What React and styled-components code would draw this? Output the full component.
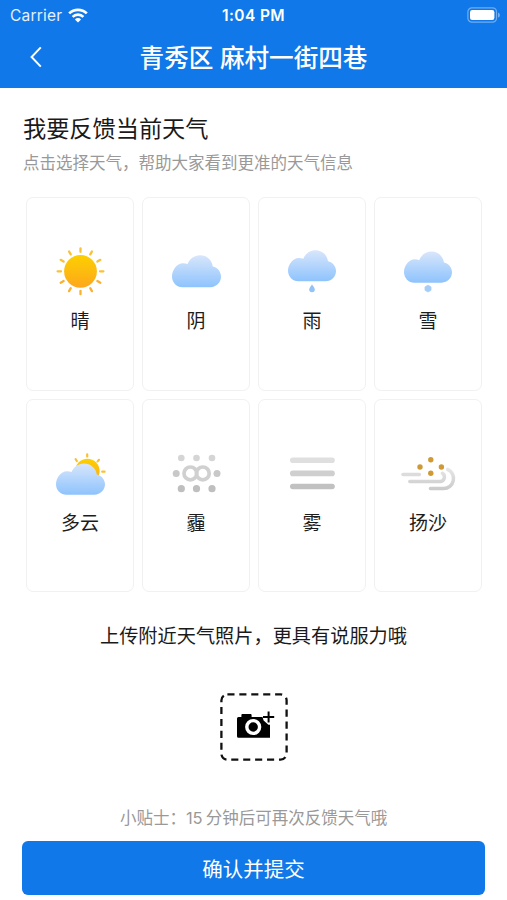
import styled, { createGlobalStyle } from "styled-components"

const GlobalStyle = createGlobalStyle`
    * {
        box-sizing: border-box;
    }

    body {
        margin: 0;
        background: #fff;
        font-family: Inter, "Noto Sans CJK SC", sans-serif;
    }
`

const CLOUD = "M10.5 32C4.7 32 0 27.2 0 21.2S4.7 8 11 8c1.7 0 3 .2 4.6.8C17.4 3.8 22.2 0 28 0c6.6 0 12 4.8 12.8 11.2C45.6 12.2 49 16.4 49 21.4 49 27.3 44.3 32 38.5 32Z"

function CloudGradient({ id }) {
    return (
        <linearGradient id={id} x1="0" y1="0" x2="0" y2="1">
            <stop offset="0" stopColor="#d8e6fb" />
            <stop offset="1" stopColor="#8ec3fd" />
        </linearGradient>
    )
}

function SunGradient({ id }) {
    return (
        <linearGradient id={id} x1="0" y1="0" x2="0" y2="1">
            <stop offset="0" stopColor="#fcd000" />
            <stop offset="1" stopColor="#fea71c" />
        </linearGradient>
    )
}

function SunnyIcon() {
    const rays = Array.from({ length: 12 }, (_, i) => i * 30)
    return (
        <Icon viewBox="0 0 60 60">
            <defs><SunGradient id="sunny" /></defs>
            <circle cx="30.5" cy="30.3" r="16.4" fill="url(#sunny)" />
            {rays.map(a => (
                <path key={a} d="M30.5 7.4v3.4" transform={`rotate(${a} 30.5 30.3)`} stroke={a > 90 && a < 270 ? "#fbb130" : "#f9c136"} strokeWidth="2.3" strokeLinecap="round" />
            ))}
        </Icon>
    )
}

function OvercastIcon() {
    return (
        <Icon viewBox="0 0 60 60">
            <defs><CloudGradient id="overcast" /></defs>
            <path d={CLOUD} transform="translate(6 14.2)" fill="url(#overcast)" />
        </Icon>
    )
}

function RainIcon() {
    return (
        <Icon viewBox="0 0 60 60">
            <defs><CloudGradient id="rain" /></defs>
            <path d={CLOUD} transform="translate(6 9.3) scale(.98 .97)" fill="url(#rain)" />
            <path d="M30 43.4c1.6 1.9 2.8 3.6 2.8 5.1a2.8 2.8 0 0 1-5.6 0c0-1.5 1.2-3.2 2.8-5.1Z" fill="#93c2f8" />
        </Icon>
    )
}

function SnowIcon() {
    return (
        <Icon viewBox="0 0 60 60">
            <defs><CloudGradient id="snow" /></defs>
            <path d={CLOUD} transform="translate(6 10.6) scale(.98 .97)" fill="url(#snow)" />
            <path d="M30 44.2l3 1.7v3.4l-3 1.7-3-1.7v-3.4Z" fill="#a6cdf8" stroke="#a6cdf8" strokeWidth=".8" strokeLinejoin="round" />
        </Icon>
    )
}

function CloudyIcon() {
    return (
        <Icon viewBox="0 0 60 60">
            <defs>
                <CloudGradient id="cloudy" />
                <SunGradient id="cloudySun" />
            </defs>
            <circle cx="37.4" cy="28" r="12.2" fill="url(#cloudySun)" />
            <path d="M37.2 11.4v2M49 16.8l-1.4 1.6M25.6 16.2l1.2 1.8M52.2 28.7h2.4" stroke="#fac02e" strokeWidth="2.2" strokeLinecap="round" />
            <path d={CLOUD} transform="translate(6 20.4) scale(1 .98)" fill="url(#cloudy)" />
        </Icon>
    )
}

function HazeIcon() {
    return (
        <Icon viewBox="0 0 60 60">
            <g fill="#d5d5d5">
                <circle cx="15.3" cy="15" r="3.3" />
                <circle cx="30.5" cy="15" r="3.3" />
                <circle cx="46" cy="15" r="3.3" />
            </g>
            <g fill="#c8c8c8">
                <circle cx="10.2" cy="30.4" r="3.5" />
                <circle cx="51" cy="30.4" r="3.5" />
            </g>
            <g fill="none" stroke="#d0d0d0" strokeWidth="3.7">
                <circle cx="24.4" cy="30.4" r="6.4" />
                <circle cx="36.8" cy="30.4" r="6.4" />
            </g>
            <g fill="#bfbfbf">
                <circle cx="15.3" cy="45.7" r="3.6" />
                <circle cx="30.5" cy="45.7" r="3.6" />
                <circle cx="46" cy="45.7" r="3.6" />
            </g>
        </Icon>
    )
}

function FogIcon() {
    return (
        <Icon viewBox="0 0 60 60">
            <g strokeWidth="5.6" strokeLinecap="round">
                <path d="M10.8 17.3h39.2" stroke="#dfdfdf" />
                <path d="M10.8 30.4h39.2" stroke="#cfcfcf" />
                <path d="M10.8 43.5h39.2" stroke="#c1c1c1" />
            </g>
        </Icon>
    )
}

function SandIcon() {
    return (
        <Icon viewBox="0 0 60 60">
            <defs>
                <linearGradient id="wind" gradientUnits="userSpaceOnUse" x1="0" y1="24" x2="0" y2="47">
                    <stop offset="0" stopColor="#e8e8e8" />
                    <stop offset="1" stopColor="#cacaca" />
                </linearGradient>
            </defs>
            <g fill="none" stroke="url(#wind)" strokeWidth="3.5" strokeLinecap="round">
                <path d="M5 31.5h16.4" stroke="#dcdcdc" />
                <path d="M11.8 38.4H42a4.4 4.4 0 0 0 2.4-8.1" />
                <path d="M32.4 45.5h13.1a10 10 0 0 0 4.2-19.1" />
            </g>
            <g fill="#cf9a35">
                <circle cx="32.8" cy="16.7" r="2.7" />
                <circle cx="22" cy="24" r="2.7" />
                <circle cx="43.4" cy="24" r="2.7" />
                <circle cx="32.8" cy="30.2" r="2.7" />
            </g>
        </Icon>
    )
}

const weathers = [
    { name: "晴", icon: SunnyIcon },
    { name: "阴", icon: OvercastIcon },
    { name: "雨", icon: RainIcon },
    { name: "雪", icon: SnowIcon },
    { name: "多云", icon: CloudyIcon },
    { name: "霾", icon: HazeIcon },
    { name: "雾", icon: FogIcon },
    { name: "扬沙", icon: SandIcon },
]

function App() {
    return (
        <Page>
            <GlobalStyle />
            <Header>
                <StatusBar>
                    <Carrier>
                        Carrier
                        <svg width="20" height="15" viewBox="0 0 20 15" fill="none" stroke="#fff" strokeWidth="2.7">
                            <path d="M1.2 5.4a12.5 12.5 0 0 1 17.6 0" />
                            <path d="M4.6 8.9a7.6 7.6 0 0 1 10.8 0" />
                            <path d="M10 14.6L6.9 11.4a4.4 4.4 0 0 1 6.2 0Z" fill="#fff" stroke="none" />
                        </svg>
                    </Carrier>
                    <Time>1:04 PM</Time>
                    <Battery>
                        <svg width="34" height="16" viewBox="0 0 34 16">
                            <rect x=".9" y=".8" width="28.6" height="14.4" rx="4" fill="none" stroke="#fff" strokeOpacity=".4" strokeWidth="1.2" />
                            <rect x="3" y="3" width="24.4" height="10" rx="2.2" fill="#fff" />
                            <path d="M31.2 5.4c2 .7 2 4.5 0 5.2Z" fill="#fff" fillOpacity=".5" />
                        </svg>
                    </Battery>
                </StatusBar>
                <NavBar>
                    <BackButton aria-label="返回">
                        <svg width="12" height="22" viewBox="0 0 12 22" fill="none" stroke="#fff" strokeWidth="2">
                            <path d="M10.8 1.4L1.6 11l9.2 9.6" />
                        </svg>
                    </BackButton>
                    <NavTitle>青秀区 麻村一街四巷</NavTitle>
                </NavBar>
            </Header>
            <Main>
                <Heading>我要反馈当前天气</Heading>
                <Description>点击选择天气，帮助大家看到更准的天气信息</Description>
                <Grid>
                    {weathers.map(({ name, icon: WeatherIcon }) => (
                        <Card key={name}>
                            <WeatherIcon />
                            <span>{name}</span>
                        </Card>
                    ))}
                </Grid>
                <UploadTitle>上传附近天气照片，更具有说服力哦</UploadTitle>
                <UploadButton aria-label="上传照片">
                    <svg width="68" height="68" viewBox="0 0 68 68">
                        <rect x="1.4" y="1.4" width="65.2" height="65.2" rx="6" fill="none" stroke="#111" strokeWidth="2.3" strokeDasharray="7.1 4.83" />
                        <path d="M17 25.6a1.5 1.5 0 0 1 1.5-1.5h2.9v-2.2a1 1 0 0 1 1-1h8.2a1 1 0 0 1 1 1v2.2H50v20.6H18.5a1.5 1.5 0 0 1-1.5-1.5Z" fill="#000" />
                        <circle cx="33.2" cy="34" r="6.4" fill="#000" stroke="#fff" strokeWidth="3.4" />
                        <path d="M42 22.4h14v6.8h-4.4v2.6h-3.2l-4.8-4.4Z" fill="#fff" />
                        <path d="M48.6 18.4v11.2M43 24h11.2" stroke="#000" strokeWidth="2" />
                    </svg>
                </UploadButton>
                <Tip>小贴士：<span>15</span>分钟后可再次反馈天气哦</Tip>
                <SubmitButton>确认并提交</SubmitButton>
            </Main>
        </Page>
    )
}

const Page = styled.div`
    width: 507px;
    height: 900px;
    overflow: hidden;
    background: #fff;
`

const Header = styled.header`
    height: 88px;
    color: #fff;
    background: #1078e8;
`

const StatusBar = styled.div`
    display: grid;
    grid-template-columns: 1fr auto 1fr;
    align-items: center;
    height: 29px;
    padding: 0 6px 0 10px;
`

const Carrier = styled.div`
    display: flex;
    align-items: center;
    gap: 6px;
    padding-top: 1px;
    font-size: 15.5px;
    letter-spacing: .2px;
    color: #e4f0fd;
`

const Time = styled.div`
    padding: 1px 4px 0 0;
    font-size: 15.5px;
    font-weight: 600;
    letter-spacing: .4px;
`

const Battery = styled.div`
    display: flex;
    justify-content: flex-end;
`

const NavBar = styled.div`
    display: grid;
    grid-template-columns: 60px 1fr 60px;
    align-items: center;
    height: 56px;
`

const BackButton = styled.button`
    display: flex;
    padding: 0 0 0 30px;
    border: 0;
    background: none;
`

const NavTitle = styled.h1`
    margin: 0;
    padding-top: 2px;
    text-align: center;
    font-size: 24.6px;
    line-height: 36px;
    font-weight: 500;
    white-space: nowrap;
`

const Main = styled.main`
    display: flex;
    flex-direction: column;
    padding: 25px 22px 0;
`

const Heading = styled.h2`
    margin: 0 0 0 1px;
    font-size: 23.2px;
    line-height: 32px;
    font-weight: 400;
    color: #1a1a1a;
`

const Description = styled.p`
    margin: 6px 0 0 1px;
    font-size: 16.5px;
    line-height: 24px;
    color: #999;
`

const Grid = styled.div`
    display: grid;
    grid-template-columns: repeat(4, 108px);
    grid-auto-rows: 193.5px;
    gap: 8px;
    margin: 22px 0 0 4px;
`

const Card = styled.div`
    display: flex;
    flex-direction: column;
    align-items: center;
    padding-top: 43px;
    border: 1.5px solid #f1f1f1;
    border-radius: 7px;

    span {
        margin-top: 7px;
        font-size: 19px;
        line-height: 28px;
        color: #1c1c1c;
    }
`

const Icon = styled.svg`
    width: 60px;
    height: 60px;
    flex: none;
`

const UploadTitle = styled.p`
    margin: 29px 0 0;
    text-align: center;
    font-size: 19.2px;
    line-height: 30px;
    color: #1a1a1a;
`

const UploadButton = styled.button`
    display: flex;
    align-self: center;
    margin-top: 42px;
    padding: 0;
    border: 0;
    background: none;
`

const Tip = styled.p`
    margin: 45px 0 0;
    text-align: center;
    font-size: 16.5px;
    line-height: 24px;
    color: #999;

    span {
        margin-right: 3px;
    }
`

const SubmitButton = styled.button`
    height: 54px;
    margin-top: 11px;
    border: 0;
    border-radius: 6px;
    font-family: inherit;
    font-size: 20.5px;
    color: #fff;
    background: #1078e8;
`

export default App
